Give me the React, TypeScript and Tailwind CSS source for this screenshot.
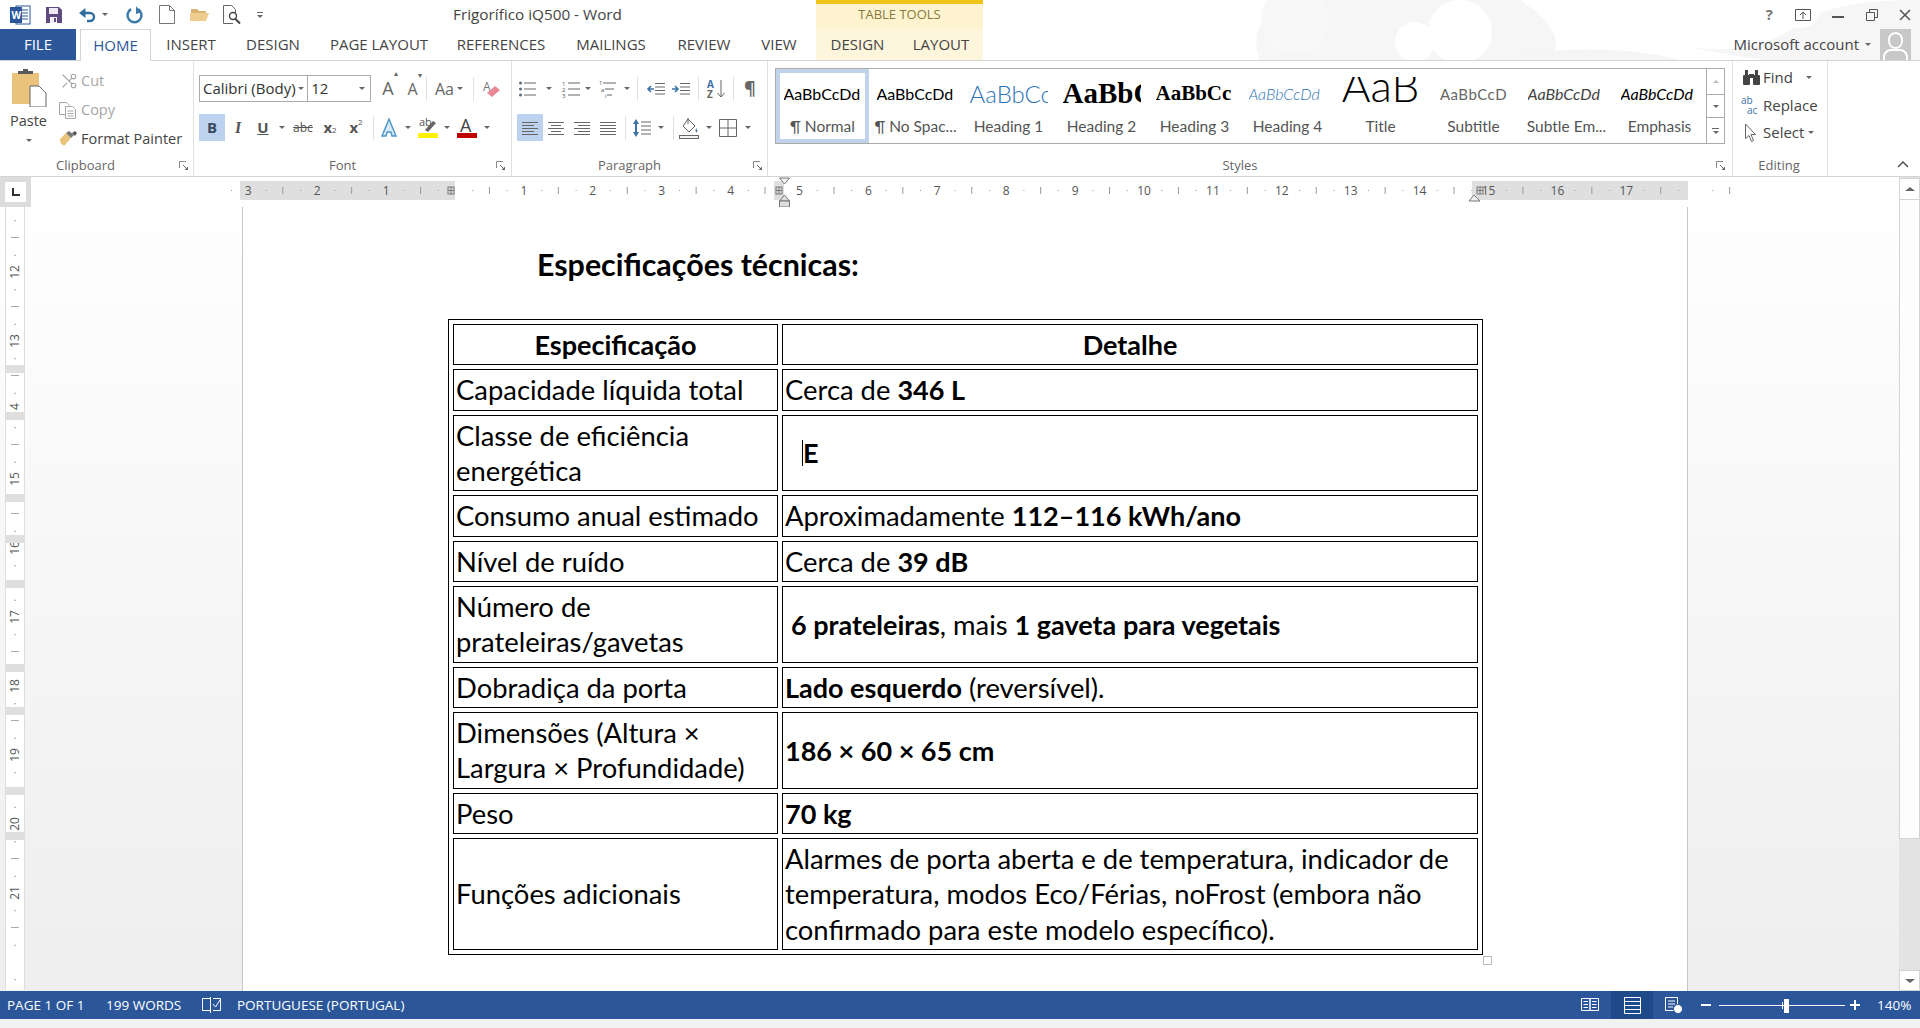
import React from 'react';
import { Scissors } from 'lucide-react';

function Caret({ className = '' }: { className?: string }) {
  return <span className={`flex items-center justify-center ${className}`}><span className="h-0 w-0 border-x-[3px] border-t-[3px] border-x-transparent border-t-[#666]" /></span>;
}

function Divider({ className = '' }: { className?: string }) {
  return <span className={`h-[24px] w-px self-center bg-[#e1e1e1] ${className}`} />;
}

function Launcher({ className = '' }: { className?: string }) {
  return (
    <svg className={`absolute bottom-[5px] h-[10px] w-[10px] ${className}`} viewBox="0 0 10 10" fill="none">
      <path d="M.5 7V.5H7" stroke="#8a8a8a" />
      <path d="M4 4l4 4" stroke="#666" />
      <path d="M5.5 9H9V5.5z" fill="#666" />
    </svg>
  );
}

function Lines({ dirs }: { dirs: number[][] }) {
  return (
    <svg className="h-[18px] w-[18px]" viewBox="0 0 18 18" stroke="#666" strokeWidth="1">
      {dirs.map(([a, b], i) => <path key={i} d={`M${a} ${3.5 + i * 3}H${b}`} />)}
    </svg>
  );
}

function ListIcon({ kind }: { kind: 'bullet' | 'number' | 'multi' }) {
  return (
    <svg className="h-[20px] w-[20px]" viewBox="0 0 20 20">
      {[4, 10, 16].map((y, i) => (
        <g key={y}>
          <path d={`M${kind === 'multi' ? 5 + i * 2 : 6} ${y}H${kind === 'multi' ? 18 - i * 2 : 18}`} stroke="#666" />
          {kind === 'bullet' && <circle cx="2.5" cy={y} r="1.5" fill="#5a6b7e" />}
          {kind === 'number' && <text x="0" y={y + 2.5} fontSize="6" fill="#555">{i + 1}</text>}
        </g>
      ))}
      {kind === 'multi' && <text x="1" y="6" fontSize="6" fill="#555">1</text>}
      {kind === 'multi' && <text x="3" y="13" fontSize="6" fill="#555">a</text>}
      {kind === 'multi' && <text x="7" y="19" fontSize="6" fill="#555">i</text>}
    </svg>
  );
}

function IndentIcon({ right }: { right?: boolean }) {
  return (
    <svg className="h-[16px] w-[20px]" viewBox="0 0 20 16">
      <path d="M9 2.5h10M9 6h10M9 9.5h10M9 13h10" stroke="#666" />
      <path d={right ? 'M1 8h6M4 5l3 3-3 3' : 'M8 8H2M5 5 2 8l3 3'} stroke="#3b73a8" strokeWidth="1.6" fill="none" />
    </svg>
  );
}

function TitleArt() {
  return (
    <svg className="pointer-events-none absolute left-[1240px] top-0 h-[60px] w-[680px]" viewBox="0 0 680 60" fill="#f6f6f6">
      <path d="M20 60C10 40 20 10 50 0h230c30 20 45 40 30 60z" />
      <circle cx="55" cy="20" r="34" fill="#f8f8f8" />
      <circle cx="220" cy="32" r="32" fill="#fff" />
      <circle cx="175" cy="42" r="20" fill="#fff" />
      <path d="M250 60c60-14 140-14 190 0z" fill="#f5f5f5" />
      <path d="M440 46c50 8 90 0 120-22 30-20 70-24 120-24v60H520z" fill="#f6f6f6" />
      <circle cx="560" cy="6" r="22" fill="#fff" />
    </svg>
  );
}

function QuickAccess() {
  return (
    <div className="flex items-center">
      <svg className="ml-[10px] h-[22px] w-[21px]" viewBox="0 0 21 22">
        <rect x="6" y="2" width="14" height="18" fill="#fff" stroke="#2b579a" />
        <path d="M12 6h6M12 9h6M12 12h6M12 15h6" stroke="#2b579a" />
        <rect x="0" y="3" width="12" height="16" fill="#2b579a" />
        <text x="1.5" y="14.5" fontSize="10" fontWeight="700" fill="#fff">W</text>
      </svg>
      <svg className="ml-[14px] h-[18px] w-[18px]" viewBox="0 0 18 18">
        <path d="M1 1h13l3 3v13H1z" fill="#5f4b7f" />
        <rect x="4" y="2" width="9" height="6" fill="#efeaf4" />
        <rect x="5" y="11" width="7" height="6" fill="#f2eff6" />
        <rect x="9" y="12" width="2" height="4" fill="#5f4b7f" />
      </svg>
      <svg className="ml-[15px] h-[18px] w-[18px]" viewBox="0 0 18 18" fill="none">
        <path d="M4 7h8a4 4 0 0 1 0 8H9" stroke="#2f6d9e" strokeWidth="2.4" />
        <path d="M7.5 2v10L1 7z" fill="#2f6d9e" />
      </svg>
      <Caret className="ml-[5px] w-[8px]" />
      <svg className="ml-[16px] h-[19px] w-[19px]" viewBox="0 0 19 19" fill="none">
        <path d="M6 4.2a7 7 0 1 0 7 0" stroke="#3c7aa8" strokeWidth="2.5" />
        <path d="M11 1v8l5-1.5z" fill="#3c7aa8" />
      </svg>
      <svg className="ml-[15px] h-[19px] w-[16px]" viewBox="0 0 16 19" fill="#fff" stroke="#777">
        <path d="M.5.5h10l5 5v13H.5z" />
        <path d="M10.5.5v5h5" fill="none" />
      </svg>
      <svg className="ml-[15px] h-[15px] w-[19px]" viewBox="0 0 19 15">
        <path d="M1 2h6l2 2h7v3H1z" fill="#d9b36f" />
        <path d="M0 14V6h19l-3 8z" fill="#efcd8e" />
      </svg>
      <svg className="ml-[14px] h-[19px] w-[19px]" viewBox="0 0 19 19" fill="none" stroke="#666">
        <path d="M10 18.5H.5V.5h8l4 4v4" fill="#fff" />
        <circle cx="10" cy="11" r="3.5" stroke="#444" strokeWidth="1.4" />
        <path d="M12.5 14l4.5 4.5" stroke="#444" strokeWidth="2" />
      </svg>
      <span className="ml-[15px] flex w-[6px] flex-col items-center gap-[2px]">
        <span className="h-px w-[6px] bg-[#666]" />
        <span className="h-0 w-0 border-x-[3px] border-t-[3px] border-x-transparent border-t-[#666]" />
      </span>
    </div>
  );
}

function Tabs() {
  return (
    <div className="flex h-[32px] border-b border-[#d4d4d4] text-[15px] text-[#444]">
      <div className="flex w-[76px] items-center justify-center bg-[#2b579a] text-white">FILE</div>
      <div className="relative z-10 ml-[4px] flex h-[32px] w-[71px] items-center justify-center border-x border-t border-[#d4d4d4] bg-white text-[#2b579a]">HOME</div>
      <div className="flex w-[80px] items-center justify-center">INSERT</div>
      <div className="flex w-[84px] items-center justify-center">DESIGN</div>
      <div className="flex w-[128px] items-center justify-center">PAGE LAYOUT</div>
      <div className="flex w-[116px] items-center justify-center">REFERENCES</div>
      <div className="flex w-[104px] items-center justify-center">MAILINGS</div>
      <div className="flex w-[82px] items-center justify-center">REVIEW</div>
      <div className="flex w-[68px] items-center justify-center">VIEW</div>
      <div className="ml-[3px] flex w-[83px] items-center justify-center bg-[#fdf6dc]">DESIGN</div>
      <div className="flex w-[84px] items-center justify-center bg-[#fdf6dc]">LAYOUT</div>
      <div className="ml-auto flex items-center pr-[9px]">
        <span>Microsoft account</span>
        <Caret className="ml-[5px] w-[8px]" />
        <span className="relative ml-[8px] h-[31px] w-[31px] overflow-hidden bg-[#c8c8c8]">
          <span className="absolute left-[8px] top-[3px] h-[17px] w-[15px] rounded-full border-2 border-white" />
          <span className="absolute left-[3px] top-[20px] h-[14px] w-[25px] rounded-t-[8px] border-2 border-white" />
        </span>
      </div>
    </div>
  );
}

function Clipboard() {
  return (
    <div className="relative flex h-full w-[194px] shrink-0 flex-col border-r border-[#e1e1e1]">
      <div className="flex h-[94px]">
        <div className="flex w-[57px] flex-col items-center pt-[8px]">
          <svg className="h-[38px] w-[36px]" viewBox="0 0 36 38">
            <rect x="1" y="4" width="27" height="31" fill="#e9c27c" />
            <path d="M7 5V2h5V0h5v2h5v3z" fill="#5a5a5a" />
            <path d="M19 17h9l7 7v14H19z" fill="#fff" stroke="#666" />
          </svg>
          <span className="mt-[5px] text-[14.5px] leading-[18px] text-[#444]">Paste</span>
          <Caret className="mt-[7px] h-[6px] w-[8px]" />
        </div>
        <div className="flex flex-col pt-[9px] text-[14.5px]">
          <div className="flex h-[21px] items-center text-[#a6a6a6]">
            <Scissors size={18} strokeWidth={1.5} className="w-[24px] -scale-x-100 text-[#a6a6a6]" />
            <span>Cut</span>
          </div>
          <div className="mt-[8px] flex h-[21px] items-center text-[#a6a6a6]">
            <svg className="h-[18px] w-[24px]" viewBox="0 0 24 18" fill="#fff" stroke="#a6a6a6">
              <path d="M2.5 1.5h7l3 3v9h-10z" />
              <path d="M8.5 5.5h7l3 3v9h-10z" />
              <path d="M10.5 10h6M10.5 12.5h6M10.5 15h6" />
            </svg>
            <span>Copy</span>
          </div>
          <div className="mt-[8px] flex h-[21px] items-center text-[#444]">
            <svg className="h-[17px] w-[24px]" viewBox="0 0 24 17">
              <path d="M3 9l6-6 5 5-6 7c-2 1-5-1-5-6z" fill="#e9c27c" />
              <path d="M9 3l5 5 3-3-5-4z" fill="#777" />
              <path d="M15 3l3-2 2 2-2 3z" fill="#555" />
            </svg>
            <span>Format Painter</span>
          </div>
        </div>
      </div>
      <div className="flex h-[22px] items-center justify-center pr-[22px] pt-[1px] text-[13px] text-[#666]">Clipboard</div>
      <Launcher className="right-[4px]" />
    </div>
  );
}

function FontGroup() {
  return (
    <div className="relative flex h-full w-[318px] shrink-0 flex-col border-r border-[#e1e1e1]">
      <div className="h-[94px] pl-[5px] pt-[14px]">
        <div className="flex h-[27px] items-center text-[15px] text-[#333]">
          <div className="flex h-[27px] w-[110px] items-center overflow-hidden border border-r-0 border-[#ababab] pl-[3px]">
            <span className="w-[93px] overflow-hidden whitespace-nowrap">Calibri (Body)</span>
            <Caret className="w-[10px]" />
          </div>
          <div className="flex h-[27px] w-[65px] items-center justify-between border border-[#ababab] pl-[3px] pr-[4px]">
            <span>12</span>
            <Caret className="w-[8px]" />
          </div>
          <span className="ml-[6px] flex w-[26px] justify-center text-[18px] text-[#666]">A<sup className="mt-[2px] text-[8px]">▴</sup></span>
          <span className="flex w-[24px] justify-center text-[16px] text-[#666]">A<sup className="mt-[2px] text-[8px]">▾</sup></span>
          <Divider />
          <span className="flex w-[44px] items-center justify-center gap-[3px] text-[16px] text-[#666]">Aa<Caret className="w-[6px]" /></span>
          <Divider className="ml-[2px]" />
          <span className="flex w-[38px] justify-center">
            <svg className="h-[20px] w-[20px]" viewBox="0 0 20 20">
              <text x="1" y="12" fontSize="12" fill="#777">A</text>
              <path d="M5 14l8-7 5 4-8 7z" fill="#e78a96" />
            </svg>
          </span>
        </div>
        <div className="mt-[12px] flex h-[27px] items-center text-[#555]">
          <span className="flex h-[27px] w-[26px] items-center justify-center bg-[#bcd2ee] text-[15px] font-bold text-[#3b4a5e]">B</span>
          <span className="flex w-[26px] justify-center font-serif text-[16px] font-bold italic">I</span>
          <span className="flex w-[24px] justify-center text-[15px] font-bold underline">U</span>
          <Caret className="w-[14px]" />
          <span className="flex w-[28px] justify-center text-[12px] line-through">abc</span>
          <span className="flex w-[26px] justify-center text-[15px] font-bold">x<span className="mt-[8px] text-[8px] font-normal">2</span></span>
          <span className="flex w-[26px] justify-center text-[15px] font-bold">x<span className="text-[8px] font-normal">2</span></span>
          <Divider className="ml-[4px]" />
          <span className="flex w-[30px] justify-center">
            <svg className="h-[20px] w-[18px]" viewBox="0 0 18 20"><path d="M9 1l7 17h-4l-1.2-4H7.200L6 18H2z" fill="#d5e8f5" stroke="#4b94c4" strokeWidth="1.400" /></svg>
          </span>
          <Caret className="w-[8px]" />
          <span className="flex w-[32px] justify-center">
            <svg className="h-[23px] w-[22px]" viewBox="0 0 22 23">
              <text x="2" y="10" fontSize="11" fill="#555">ab</text>
              <path d="M8 14l8-9 3 2-8 9z" fill="#666" />
              <rect x="1" y="17" width="20" height="5" rx="1.500" fill="#fff200" />
            </svg>
          </span>
          <Caret className="w-[6px]" />
          <span className="flex w-[34px] justify-center">
            <svg className="h-[22px] w-[20px]" viewBox="0 0 20 22">
              <text x="3" y="15" fontSize="18" fill="#444">A</text>
              <rect x="0" y="16" width="20" height="5" fill="#c00000" />
            </svg>
          </span>
          <Caret className="w-[6px]" />
        </div>
      </div>
      <div className="flex h-[22px] items-center justify-center pr-[20px] pt-[1px] text-[13px] text-[#666]">Font</div>
      <Launcher className="right-[5px]" />
    </div>
  );
}

function ParagraphGroup() {
  return (
    <div className="relative flex h-full w-[256px] shrink-0 flex-col border-r border-[#e1e1e1]">
      <div className="h-[94px] pl-[5px] pt-[14px]">
        <div className="flex h-[27px] items-center">
          <span className="flex w-[21px] justify-center"><ListIcon kind="bullet" /></span>
          <Caret className="w-[22px]" />
          <span className="flex w-[24px] justify-center"><ListIcon kind="number" /></span>
          <Caret className="w-[8px]" />
          <span className="flex w-[32px] justify-center"><ListIcon kind="multi" /></span>
          <Caret className="w-[6px]" />
          <Divider className="ml-[7px]" />
          <span className="ml-[6px] flex w-[24px] justify-center"><IndentIcon /></span>
          <span className="flex w-[26px] justify-center"><IndentIcon right /></span>
          <Divider className="ml-[4px]" />
          <span className="flex w-[34px] justify-center">
            <svg className="h-[20px] w-[20px]" viewBox="0 0 20 20">
              <text x="1" y="9" fontSize="10" fontWeight="700" fill="#3b73a8">A</text>
              <text x="1" y="19" fontSize="10" fontWeight="700" fill="#666">Z</text>
              <path d="M15 1v17M11.500 14l3.500 4 3.500-4" stroke="#666" fill="none" />
            </svg>
          </span>
          <Divider />
          <span className="flex w-[32px] justify-center text-[18px] font-bold text-[#666]">¶</span>
        </div>
        <div className="mt-[12px] flex h-[27px] items-center">
          <span className="flex h-[27px] w-[26px] items-center justify-center bg-[#bcd2ee]"><Lines dirs={[[1, 17], [1, 13], [1, 17], [1, 13], [1, 17]]} /></span>
          <span className="flex w-[26px] justify-center"><Lines dirs={[[1, 17], [4, 14], [1, 17], [4, 14], [1, 17]]} /></span>
          <span className="flex w-[26px] justify-center"><Lines dirs={[[1, 17], [5, 17], [1, 17], [5, 17], [1, 17]]} /></span>
          <span className="flex w-[25px] justify-center"><Lines dirs={[[1, 17], [1, 17], [1, 17], [1, 17], [1, 17]]} /></span>
          <Divider className="ml-[5px]" />
          <span className="flex w-[32px] justify-center">
            <svg className="h-[20px] w-[20px]" viewBox="0 0 20 20">
              <path d="M9 4h10M9 8h10M9 12h10M9 16h10" stroke="#666" />
              <path d="M4 1L1 6h6zM4 19l-3-5h6z" fill="#3b73a8" />
              <path d="M4 5v10" stroke="#3b73a8" strokeWidth="2" />
            </svg>
          </span>
          <Caret className="w-[6px]" />
          <Divider className="ml-[9px]" />
          <span className="flex w-[30px] justify-center">
            <svg className="h-[22px] w-[20px]" viewBox="0 0 20 22" fill="none" stroke="#666">
              <path d="M9 2l7 7-6 6-6-6z" />
              <path d="M9 1v6" />
              <path d="M17 11c1 2 2 3 1 4s-2 0-1-4z" fill="#3b73a8" stroke="none" />
              <rect x=".5" y="18.500" width="19" height="3" fill="#f5f5f5" />
            </svg>
          </span>
          <Caret className="w-[10px]" />
          <span className="flex w-[28px] justify-center">
            <svg className="h-[18px] w-[18px]" viewBox="0 0 18 18" fill="none" stroke="#666"><path d="M.5.500h17v17H.5zM9 .5v17M.5 9h17" /></svg>
          </span>
          <Caret className="w-[12px]" />
        </div>
      </div>
      <div className="flex h-[22px] items-center justify-center pr-[20px] pt-[1px] text-[13px] text-[#666]">Paragraph</div>
      <Launcher className="right-[4px]" />
    </div>
  );
}

function StyleItem({ sample, label, sampleClass, selected }: { sample: string; label: string; sampleClass: string; selected?: boolean }) {
  return (
    <div className={`flex h-full w-[93px] shrink-0 flex-col items-center overflow-hidden ${selected ? 'border-[4px] border-[#c0d3ea]' : 'border-[4px] border-transparent'}`}>
      <div className={`flex h-[42px] w-[78px] overflow-hidden whitespace-nowrap ${sampleClass}`}>{sample}</div>
      <div className="mt-[1px] whitespace-nowrap text-[15.5px] leading-[20px] text-[#555]">{label}</div>
    </div>
  );
}

function Styles() {
  return (
    <div className="relative flex h-full w-[965px] shrink-0 flex-col border-r border-[#e1e1e1]">
      <div className="h-[94px] pl-[7px] pt-[7px]">
        <div className="flex h-[76px] w-[950px] border border-[#ababab] [font-family:Lato,sans-serif]">
          <div className="flex">
            <StyleItem selected sample="AaBbCcDd" label="¶ Normal" sampleClass="items-center justify-start text-[16px] text-black" />
            <StyleItem sample="AaBbCcDd" label="¶ No Spac..." sampleClass="items-center justify-start text-[16px] text-black" />
            <StyleItem sample="AaBbCc" label="Heading 1" sampleClass="items-center justify-start text-[24px] font-light text-[#2e74b5]" />
            <StyleItem sample="AaBbC" label="Heading 2" sampleClass="items-center justify-start [font-family:'Liberation_Serif',serif] text-[29px] font-bold text-black" />
            <StyleItem sample="AaBbCc" label="Heading 3" sampleClass="items-center justify-start [font-family:'Liberation_Serif',serif] text-[21px] font-bold text-black" />
            <StyleItem sample="AaBbCcDd" label="Heading 4" sampleClass="items-center justify-start text-[16px] italic font-light text-[#2e74b5]" />
            <StyleItem sample="AaB" label="Title" sampleClass="items-start justify-center text-[44px] font-light leading-[24px] text-black [clip-path:inset(4px_0_0_0)]" />
            <StyleItem sample="AaBbCcD" label="Subtitle" sampleClass="items-center justify-center text-[15px] tracking-[0.5px] text-[#666]" />
            <StyleItem sample="AaBbCcDd" label="Subtle Em..." sampleClass="items-center justify-start text-[16px] italic text-[#444]" />
            <StyleItem sample="AaBbCcDd" label="Emphasis" sampleClass="items-center justify-start text-[16px] italic text-black" />
          </div>
          <div className="flex w-[19px] flex-col border-l border-[#ababab]">
            <div className="flex h-[25px] items-center justify-center"><span className="h-0 w-0 border-x-[3px] border-b-[3px] border-x-transparent border-b-[#bbb]" /></div>
            <div className="flex h-[24px] items-center justify-center border-y border-[#ababab]"><Caret className="w-[8px]" /></div>
            <div className="flex flex-1 flex-col items-center justify-center gap-[2px]"><span className="h-px w-[7px] bg-[#666]" /><Caret className="h-[3px] w-[8px]" /></div>
          </div>
        </div>
      </div>
      <div className="flex h-[22px] items-center justify-center pr-[20px] pt-[1px] text-[13px] text-[#666]">Styles</div>
      <Launcher className="right-[6px]" />
    </div>
  );
}

function Editing() {
  return (
    <div className="flex h-full w-[95px] shrink-0 flex-col border-r border-[#e1e1e1]">
      <div className="h-[94px] pl-[8px] pt-[4px] text-[15px] text-[#444]">
        <div className="flex h-[24px] items-center">
          <svg className="h-[17px] w-[22px]" viewBox="0 0 22 17" fill="#444">
            <rect x="2" y="6" width="7" height="10" rx="1" />
            <rect x="12" y="6" width="7" height="10" rx="1" />
            <rect x="4" y="1" width="3" height="6" />
            <rect x="14" y="1" width="3" height="6" />
            <rect x="8" y="5" width="5" height="4" />
          </svg>
          <span>Find</span>
          <Caret className="ml-[12px] w-[8px]" />
        </div>
        <div className="mt-[4px] flex h-[24px] items-center">
          <span className="relative h-[20px] w-[22px] text-[10px] leading-[10px] text-[#3b73a8]"><span className="absolute left-0 top-0">ab</span><span className="absolute left-[6px] top-[10px]">ac</span></span>
          <span>Replace</span>
        </div>
        <div className="mt-[3px] flex h-[24px] items-center">
          <svg className="h-[19px] w-[22px]" viewBox="0 0 22 19" fill="#fff" stroke="#666"><path d="M4.500 1l10 10.500H10l2.500 6-2 1-2.500-6-3.500 3z" /></svg>
          <span>Select</span>
          <Caret className="ml-[3px] w-[8px]" />
        </div>
      </div>
      <div className="flex h-[22px] items-center justify-center pr-[2px] pt-[1px] text-[13px] text-[#666]">Editing</div>
    </div>
  );
}

const rulerNums = [-3, -2, -1, 1, 2, 3, 4, 5, 6, 7, 8, 9, 10, 11, 12, 13, 14, 15, 16, 17];
const rulerTicks = Array.from({ length: 88 }, (_, i) => i - 13);

function HorizontalRuler() {
  const px = (v: number) => 215 + 68.9 * v;
  return (
    <svg className="ml-[209px] mt-[4px] block h-[19px] w-[1448px] overflow-visible" viewBox="0 0 1448 19">
      <rect width="1448" height="19" fill="#dfdfdf" />
      <rect x="215" width="1017" height="19" fill="#fff" />
      {rulerTicks.map(t => t % 4 !== 0 && (
        t % 2 === 0
          ? <path key={t} d={`M${px(t / 4)} 6v7`} stroke="#999" />
          : <rect key={t} x={px(t / 4)} y="9" width="1" height="1" fill="#999" />
      ))}
      {rulerNums.map(n => (
        <text key={n} x={px(n)} y="14" textAnchor="middle" fontSize="12" fill="#555">{Math.abs(n)}</text>
      ))}
      <g stroke="#777">
        <rect x="208" y="6" width="6" height="7" fill="#ddd" />
        <path d="M208 9.500h6M211 6v7" />
        <rect x="534" width="10" height="19" fill="#dfdfdf" stroke="none" />
        <rect x="536" y="6" width="6" height="7" fill="#ddd" />
        <path d="M536 9.500h6M539 6v7" />
        <rect x="1232" width="12" height="19" fill="#dfdfdf" stroke="none" />
        <rect x="1237" y="6" width="6" height="7" fill="#ddd" />
        <path d="M1237 9.500h6M1240 6v7" />
        <path d="M539.500-3h10l-5 6z" fill="#f0f0f0" />
        <path d="M544.500 14l5 6h-10z" fill="#ddd" />
        <rect x="539.500" y="20" width="10" height="6" fill="#ddd" />
        <path d="M1234 14l6 6h-11z" fill="#f0f0f0" />
      </g>
    </svg>
  );
}

const vNums = [12, 13, 14, 15, 16, 17, 18, 19, 20, 21];
const rowMarks = [158, 205, 287, 328, 373, 457, 500, 580, 625];
const vTicks = Array.from({ length: 46 }, (_, i) => i);

function VerticalRuler() {
  return (
    <svg className="ml-[5px] block h-[783px] w-[20px]" viewBox="0 0 20 783">
      <rect width="20" height="783" fill="#fff" />
      <path d="M.5 0v783M19.500 0v783" stroke="#ddd" />
      {vTicks.map(i => {
        const y = 65 + 17.25 * (i - 3);
        return i % 4 === 3 ? null : i % 2 === 1
          ? <path key={i} d={`M6 ${y}h8`} stroke="#aaa" />
          : <rect key={i} x="9" y={y} width="2" height="1" fill="#aaa" />;
      })}
      {vNums.map((n, i) => (
        <text key={n} transform={`translate(14 ${65 + 69 * i}) rotate(-90)`} textAnchor="middle" fontSize="12" fill="#555">{n}</text>
      ))}
      {rowMarks.map(y => <rect key={y} y={y} width="20" height="8" fill="#dfdfdf" />)}
    </svg>
  );
}

const rows: { left: React.ReactNode; right: React.ReactNode; rightClass?: string }[] = [
  { left: 'Capacidade líquida total', right: <>Cerca de <b>346 L</b></> },
  { left: <>Classe de eficiência<br />energética</>, right: <span className="relative"><span className="absolute left-[-1px] top-[4px] h-[26px] w-px bg-black" /><b>E</b></span>, rightClass: 'pl-[20px]' },
  { left: 'Consumo anual estimado', right: <>Aproximadamente <b>112–116 kWh/ano</b></> },
  { left: 'Nível de ruído', right: <>Cerca de <b>39 dB</b></> },
  { left: <>Número de<br />prateleiras/gavetas</>, right: <><b>6 prateleiras</b>, mais <b>1 gaveta para vegetais</b></>, rightClass: 'pl-[8px]' },
  { left: 'Dobradiça da porta', right: <><b>Lado esquerdo</b> (reversível).</> },
  { left: <>Dimensões (Altura ×<br />Largura × Profundidade)</>, right: <b>186 × 60 × 65 cm</b> },
  { left: 'Peso', right: <b>70 kg</b> },
  { left: 'Funções adicionais', right: <>Alarmes de porta aberta e de temperatura, indicador de<br />temperatura, modos Eco/Férias, noFrost (embora não<br />confirmado para este modelo específico).</> },
];

function SpecTable() {
  return (
    <div className="relative ml-[205px] mt-[35px] w-[1035px]">
      <table className="w-[1035px] table-fixed border-separate border-spacing-[4px] border border-black text-[27.4px] leading-[35.33px] text-black [&_b]:text-[27px] [&_b]:leading-[1px] [&_th]:text-[27px]">
        <colgroup>
          <col className="w-[325px]" />
          <col />
        </colgroup>
        <thead>
          <tr>
            <th className="border border-black py-[2px] text-center font-bold">Especificação</th>
            <th className="border border-black py-[2px] text-center font-bold">Detalhe</th>
          </tr>
        </thead>
        <tbody>
          {rows.map((row, i) => (
            <tr key={i}>
              <td className="whitespace-nowrap border border-black py-[2px] pl-[2px] align-middle">{row.left}</td>
              <td className={`whitespace-nowrap border border-black py-[2px] align-middle ${row.rightClass ?? 'pl-[2px]'}`}>{row.right}</td>
            </tr>
          ))}
        </tbody>
      </table>
      <span className="absolute left-[1035px] top-[637px] h-[9px] w-[9px] border border-[#bbb] bg-white" />
    </div>
  );
}

function Scrollbar() {
  return (
    <div className="flex h-full w-[21px] shrink-0 flex-col bg-[#e3e3e3] pt-[1px]">
      <div className="flex h-[22px] items-center justify-center border border-[#d4d4d4] bg-white"><span className="h-0 w-0 border-x-[5px] border-b-[4px] border-x-transparent border-b-[#666]" /></div>
      <div className="h-[639px] border-x border-b border-[#d4d4d4] bg-[#fdfdfd]" />
      <div className="flex-1" />
      <div className="flex h-[21px] items-center justify-center border border-[#d4d4d4] bg-white"><span className="h-0 w-0 border-x-[5px] border-t-[4px] border-x-transparent border-t-[#666]" /></div>
    </div>
  );
}

function StatusBar() {
  return (
    <div className="flex h-[28px] shrink-0 items-center bg-[#2b579a] text-[13.5px] text-white">
      <span className="ml-[7px] w-[99px]">PAGE 1 OF 1</span>
      <span className="w-[96px]">199 WORDS</span>
      <svg className="h-[18px] w-[20px]" viewBox="0 0 20 18" fill="none" stroke="#fff">
        <path d="M8.500 2.500h-8v12h8zM8.500 1v16" />
        <path d="M11 2.500h7.500v12H11" />
        <path d="M11 8l2.500 3L18 4" />
      </svg>
      <span className="ml-[15px]">PORTUGUESE (PORTUGAL)</span>
      <div className="ml-auto flex h-full items-center">
        <svg className="h-[16px] w-[18px]" viewBox="0 0 18 16" fill="none" stroke="#fff">
          <path d="M.5 1.500h8.500v12H.5zM9 1.500h8.500v12H9zM2.500 4.500h4.500M2.500 7.500h4.500M2.500 10.500h4.500M11 4.500h4.500M11 7.500h4.500M11 10.500h4.500" />
        </svg>
        <span className="ml-[12px] flex h-full w-[42px] items-center justify-center bg-[#1e4a8a]">
          <svg className="h-[17px] w-[17px]" viewBox="0 0 17 17" fill="none" stroke="#fff"><path d="M.5.500h16v16H.5zM.5 4.500h16M.5 8.500h16M.5 12.500h16" /></svg>
        </span>
        <svg className="ml-[12px] h-[18px] w-[18px]" viewBox="0 0 18 18" fill="none" stroke="#fff">
          <path d="M.5 1.500h12v13H.5zM3 5h7M3 8h7M3 11h5" />
          <circle cx="13" cy="13" r="4.500" fill="#fff" stroke="#2b579a" />
        </svg>
        <span className="ml-[18px] h-[2px] w-[10px] bg-white" />
        <span className="relative ml-[8px] flex h-[1px] w-[126px] bg-white">
          <span className="absolute left-[63px] top-[-3px] h-[7px] w-px bg-white" />
          <span className="absolute left-[65px] top-[-6px] h-[14px] w-[5px] bg-white" />
        </span>
        <span className="relative ml-[5px] h-[10px] w-[10px]">
          <span className="absolute left-0 top-[4px] h-[2px] w-[10px] bg-white" />
          <span className="absolute left-[4px] top-0 h-[10px] w-[2px] bg-white" />
        </span>
        <span className="ml-[17px] mr-[9px] w-[34px] text-right">140%</span>
      </div>
    </div>
  );
}

export default function App() {
  return (
    <div className="relative flex h-[1028px] w-[1920px] flex-col overflow-hidden bg-[#f1f1f1] [font-family:'Open_Sans',sans-serif]">
      <div className="relative bg-white">
        <TitleArt />
        <div className="relative flex h-[29px] items-center">
          <QuickAccess />
          <span className="absolute left-[453px] text-[15.3px] text-[#444]">Frigorífico iQ500 - Word</span>
          <div className="absolute left-[816px] top-0 flex h-[29px] w-[167px] items-center justify-center border-t-[4px] border-[#f0c419] bg-[#fdf3cf] pb-[3px] text-[13px] text-[#8a7a3c]">TABLE TOOLS</div>
          <div className="ml-auto flex items-center pr-[9px]">
            <span className="mr-[22px] text-[15px] font-bold text-[#777]">?</span>
            <svg className="mr-[21px] h-[12px] w-[16px]" viewBox="0 0 16 12" fill="none" stroke="#555"><path d="M.5.500h15v11H.5zM8 10V4M5 6l3-3 3 3" /></svg>
            <span className="mr-[22px] mt-[5px] h-[2px] w-[12px] bg-[#555]" />
            <svg className="mr-[21px] h-[12px] w-[12px]" viewBox="0 0 12 12" fill="none" stroke="#555"><path d="M3.500 3V.5h8v8H9M.5 3.500h8v8h-8z" /></svg>
            <svg className="h-[12px] w-[12px]" viewBox="0 0 12 12" stroke="#555" strokeWidth="1.500"><path d="M1 1l10 10M11 1 1 11" /></svg>
          </div>
        </div>
        <div className="relative">
          <Tabs />
        </div>
        <div className="flex h-[116px] border-b border-[#d4d4d4] bg-white">
          <Clipboard />
          <FontGroup />
          <ParagraphGroup />
          <Styles />
          <Editing />
          <div className="flex flex-1 items-end justify-end pb-[8px] pr-[11px]">
            <svg className="h-[7px] w-[12px]" viewBox="0 0 12 7" fill="none" stroke="#555" strokeWidth="1.500"><path d="M1 6l5-5 5 5" /></svg>
          </div>
        </div>
      </div>

      <div className="flex h-[814px] shrink-0 bg-gradient-to-b from-white to-[#eeeeee]">
        <div className="w-[31px] shrink-0">
          <div className="flex h-[30px] items-center justify-center border-[5px] border-[#dcdcdc] bg-white">
            <svg className="h-[10px] w-[10px]" viewBox="0 0 10 10" stroke="#333" strokeWidth="2" fill="none"><path d="M2 1v7h7" /></svg>
          </div>
          <VerticalRuler />
        </div>
        <div className="flex min-w-0 flex-1 flex-col">
          <HorizontalRuler />
          <div className="ml-[211px] mt-[7px] w-[1446px] flex-1 border-x border-[#c6c6c6] bg-white [font-family:Lato,sans-serif]">
            <h1 className="ml-[294px] mt-[37px] text-[30.4px] font-bold leading-[40px] text-black">Especificações técnicas:</h1>
            <SpecTable />
          </div>
        </div>
        <Scrollbar />
      </div>

      <StatusBar />
    </div>
  );
}
